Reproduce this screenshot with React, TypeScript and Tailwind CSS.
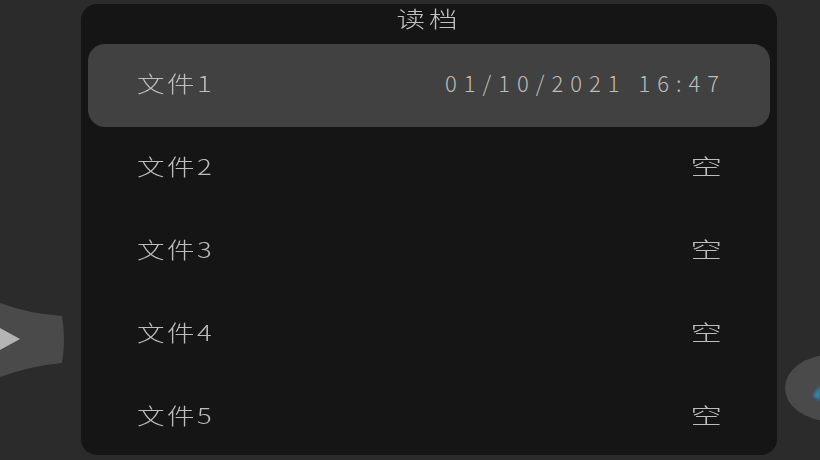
import React from "react";

const rows = [
  { name: "文件1", value: "01/10/2021\u00a016:47", active: true },
  { name: "文件2", value: "空" },
  { name: "文件3", value: "空" },
  { name: "文件4", value: "空" },
  { name: "文件5", value: "空" },
];

export default function App() {
  return (
    <div
      className="relative w-[820px] h-[460px] overflow-hidden bg-[#2b2b2b] flex items-start"
      style={{ fontFamily: '"Noto Sans CJK SC", "Noto Sans", sans-serif' }}
    >
      {/* left decorative arrow */}
      <svg className="absolute left-0 top-[300px]" width="70" height="80" viewBox="0 0 70 80">
        <path d="M0 3 Q30 14 62 16 Q66 40 62 63 Q30 66 0 77 Z" fill="#4a4a4a" />
        <path d="M0 28 L20 39 L0 50 Z" fill="#b4b4b4" />
      </svg>
      {/* right decorative button */}
      <svg className="absolute left-[782px] top-[350px]" width="38" height="75" viewBox="0 0 38 75">
        <defs>
          <filter id="b" x="-50%" y="-50%" width="200%" height="200%">
            <feGaussianBlur stdDeviation="1.5" />
          </filter>
        </defs>
        <ellipse cx="48" cy="38" rx="45" ry="33" fill="#4a4a4a" />
        <path d="M38 36 L31 46 L38 50 Z" fill="#2b8bb5" filter="url(#b)" />
      </svg>

      <div className="relative ml-[81px] mt-[4px] w-[696px] h-[451px] rounded-[16px] bg-[#151515] overflow-hidden flex flex-col">
        <div className="h-[40px] shrink-0 flex justify-center text-[22px] leading-[26px] text-[#c2c2c2] font-light">
          <span className="inline-block scale-x-[1.3] tracking-[3px]">读档</span>
        </div>
        <div className="flex flex-col px-[7px]">
          {rows.map((r) => (
            <div
              key={r.name}
              className={
                "h-[83px] shrink-0 flex items-center justify-between pl-[49px] pr-[48px] pb-[7px] rounded-[17px] leading-[28px] text-[#bdbdbd] font-light " +
                (r.active ? "bg-[#414141]" : "")
              }
            >
              <span className="inline-block origin-left scale-x-[1.25] text-[22px] tracking-[2px]">{r.name}</span>
              {r.value === "空" ? (
                <span className="inline-block origin-right scale-x-[1.5] text-[21px]">{r.value}</span>
              ) : (
                <span className="inline-block text-[22px] tracking-[7px] -mr-[4px]">{r.value}</span>
              )}
            </div>
          ))}
        </div>
      </div>
    </div>
  );
}
